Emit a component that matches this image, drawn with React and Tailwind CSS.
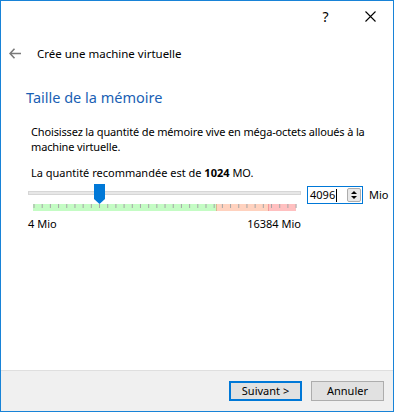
import React from "react";

const font = { fontFamily: '"Noto Sans", "Open Sans", sans-serif' };

function Bar() {
  const ticks = [];
  for (let i = 0; i <= 32; i++) {
    const x = 0.5 + i * 8.19;
    ticks.push(<rect key={i} x={x} y={0} width={1} height={4} fill="#a6a6a6" />);
  }
  return (
    <svg width="264" height="7" viewBox="0 0 264 7" className="block">
      <rect x="0" y="0" width="183" height="7" fill="#c4fcc4" />
      <rect x="183" y="0" width="52" height="7" fill="#ffd2bf" />
      <rect x="235" y="0" width="28" height="7" fill="#ffc0c0" />
      <rect x="235" y="0" width="1" height="7" fill="#f29a9a" />
      <rect x="183" y="0" width="1" height="7" fill="#d8b88f" />
      {ticks}
    </svg>
  );
}

export default function App() {
  return (
    <div
      className="w-[394px] h-[412px] border border-[#1883d7] bg-white flex flex-col text-[11px] text-[#000] overflow-hidden"
      style={font}
    >
      {/* title bar */}
      <div className="h-[30px] flex justify-end items-center shrink-0">
        <div className="w-[46px] h-[30px] flex items-center justify-center text-[14px] pt-[1px] pl-[3px]">?</div>
        <div className="w-[46px] h-[30px] flex items-center justify-center">
          <svg width="11" height="11" viewBox="0 0 11 11">
            <path d="M0.5 0.5 L10.5 10.5 M10.5 0.5 L0.5 10.5" stroke="#000" strokeWidth="1.1" />
          </svg>
        </div>
      </div>

      {/* header */}
      <div className="h-[45px] flex items-center shrink-0 pl-[8px]">
        <svg width="12" height="11" viewBox="0 0 12 11" className="mr-[16px] -mt-[1px]">
          <path d="M5.5 0.7 L1 5.5 L5.5 10.3 M1 5.5 H12" stroke="#7a7a7a" strokeWidth="1.6" fill="none" />
        </svg>
        <span className="text-[11.5px]">Crée une machine virtuelle</span>
      </div>

      {/* content */}
      <div className="flex-1 flex flex-col pl-[25px]">
        <div className="text-[14.5px] text-[#1a5fb4] leading-[20px] mt-[11px]">Taille de la mémoire</div>
        <div className="pl-[5px] mt-[17px] leading-[15px] whitespace-nowrap tracking-[-0.15px]">
          Choisissez la quantité de mémoire vive en méga-octets alloués à la
          <br />
          machine virtuelle.
        </div>
        <div className="pl-[5px] mt-[11px] leading-[15px]">
          La quantité recommandée est de <b>1024</b> MO.
        </div>

        <div className="flex items-start mt-[1px]">
          <div className="flex flex-col pl-[2px] w-[275px] shrink-0">
            <div className="relative h-[34px]">
              <div className="absolute left-0 top-[10px] w-[273px] h-[4px] bg-[#e7e7e7] border border-[#d6d6d6]" />
              <svg width="11" height="20" viewBox="0 0 11 20" className="absolute left-[66px] top-[3px]">
                <path d="M0 0 H11 V15 L5.5 20 L0 15 Z" fill="#0078d7" />
              </svg>
              <div className="absolute left-[5px] top-[23px]">
                <Bar />
              </div>
            </div>
            <div className="flex justify-between mt-[1px] leading-[15px]">
              <span>4 Mio</span>
              <span>16384 Mio</span>
            </div>
          </div>
          <div className="flex items-center mt-[5px] ml-[6px] shrink-0">
            <div className="w-[56px] h-[18px] border border-[#0078d7] flex items-center">
              <span className="pl-[2px] leading-[14px]">4096</span>
              <span className="w-[1px] h-[13px] bg-black ml-[1px]" />
              <div className="ml-auto mr-[1px] w-[14px] h-[14px] border border-[#adadad] bg-[#e8e8e8] rounded-[2px] flex flex-col items-center justify-center gap-[2px]">
                <svg width="6" height="3" viewBox="0 0 6 3"><path d="M0 3 L3 0 L6 3 Z" fill="#000" /></svg>
                <svg width="6" height="3" viewBox="0 0 6 3"><path d="M0 0 L3 3 L6 0 Z" fill="#000" /></svg>
              </div>
            </div>
            <span className="ml-[6px]">Mio</span>
          </div>
        </div>
      </div>

      {/* footer */}
      <div className="h-[41px] shrink-0 border-t border-[#dfdfdf] bg-[#f0f0f0] flex items-center justify-end pr-[9px] gap-[9px]">
        <button className="w-[73px] h-[20px] border-2 border-[#0078d7] bg-[#e1e1e1] text-[11px] leading-[14px] text-black" style={font}>
          Suivant &gt;
        </button>
        <button className="w-[73px] h-[20px] border border-[#adadad] bg-[#e1e1e1] text-[11px] leading-[14px] text-black" style={font}>
          Annuler
        </button>
      </div>
    </div>
  );
}
